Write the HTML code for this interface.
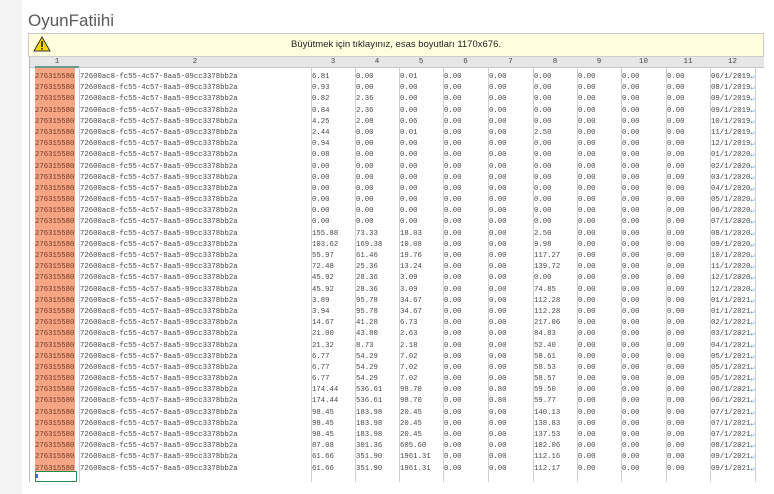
<!DOCTYPE html>
<html><head><meta charset="utf-8"><style>
*{margin:0;padding:0;box-sizing:border-box}
body{width:774px;height:494px;background:#fff;position:relative;overflow:hidden;font-family:"Liberation Sans",sans-serif}
.strip{position:absolute;left:0;top:0;width:22px;height:494px;background:#f4f4f4}
.bot{position:absolute;left:22px;top:482px;width:752px;height:12px;background:#fff}
h1{position:absolute;left:28px;top:11px;font-size:17px;font-weight:normal;color:#5a5a5a}
.note{position:absolute;left:28px;top:33px;width:736px;height:24px;background:#ffffe0;border:1px solid #ccc;font-size:9.5px;color:#222;text-align:center;line-height:22px}
.note svg{position:absolute;left:4px;top:2px}
.tbl{position:absolute;left:29px;top:57px;width:735px;height:425px;border-left:1px solid #bbb;background:#fff}
.hd{position:absolute;left:0;top:0;width:734px;height:11px;background:#e6e6e6;border-bottom:1px solid #c8c8c8}
.hd span{position:absolute;top:0;font:7.5px "Liberation Mono",monospace;color:#444;text-align:center;line-height:11px}
.vl{position:absolute;top:11px;width:1px;height:414px;background:#d0d0d0}
.sal{position:absolute;left:5px;top:11px;width:40px;height:403px;background:#f8a585}
.rows{position:absolute;left:0;top:15px;width:735px}
.r{height:11.2px;position:relative;font:7.3px "Liberation Mono",monospace;color:#474747;line-height:11px;white-space:nowrap}
.r span{position:absolute;top:0}
.r span:nth-child(1){left:5px;color:#6b3a22}
.r span:nth-child(2){left:50px}
.r span:nth-child(3){left:282px}
.r span:nth-child(4){left:326px}
.r span:nth-child(5){left:370px}
.r span:nth-child(6){left:414px}
.r span:nth-child(7){left:459px}
.r span:nth-child(8){left:504px}
.r span:nth-child(9){left:548px}
.r span:nth-child(10){left:592px}
.r span:nth-child(11){left:637px}
.r span:nth-child(12){left:681px}
.r span:nth-child(12)::after{content:"\21B5";color:#4a90e8;font-size:6px;vertical-align:top;font-family:"DejaVu Sans",sans-serif}
.sel{position:absolute;left:5px;top:414px;width:42px;height:11px;border:1px solid #2a8a4a}
.sel::before{content:"";position:absolute;left:0;top:2px;width:2px;height:4px;background:#3a6fd0}
</style></head><body>
<div class="strip"></div>
<h1>OyunFatiihi</h1>
<div class="note"><svg width="18" height="16" viewBox="0 0 18 16"><path d="M9 1 L17 15 L1 15 Z" fill="#ffd800" stroke="#333" stroke-width="1"/><rect x="8.2" y="5" width="1.6" height="6" fill="#222"/><rect x="8.2" y="12" width="1.6" height="1.6" fill="#222"/></svg>Büyütmek için tıklayınız, esas boyutları 1170x676.</div>
<div class="tbl">
<div class="hd">
<span style="left:5px;width:44px;border-bottom:2px solid #6a9a8a;height:11px">1</span>
<span style="left:49px;width:232px">2</span>
<span style="left:281px;width:44px">3</span>
<span style="left:325px;width:44px">4</span>
<span style="left:369px;width:44px">5</span>
<span style="left:413px;width:45px">6</span>
<span style="left:458px;width:45px">7</span>
<span style="left:503px;width:44px">8</span>
<span style="left:547px;width:44px">9</span>
<span style="left:591px;width:45px">10</span>
<span style="left:636px;width:44px">11</span>
<span style="left:680px;width:45px">12</span>
</div>
<div class="sal"></div>
<div class="vl" style="left:49px"></div><div class="vl" style="left:281px"></div><div class="vl" style="left:325px"></div><div class="vl" style="left:369px"></div><div class="vl" style="left:413px"></div><div class="vl" style="left:458px"></div><div class="vl" style="left:503px"></div><div class="vl" style="left:547px"></div><div class="vl" style="left:591px"></div><div class="vl" style="left:636px"></div><div class="vl" style="left:680px"></div><div class="vl" style="left:725px"></div>
<div class="rows">
<div class="r"><span>276315580</span><span>72600ac8-fc55-4c57-8aa5-09cc3378bb2a</span><span>6.81</span><span>0.00</span><span>0.01</span><span>0.00</span><span>0.00</span><span>0.00</span><span>0.00</span><span>0.00</span><span>0.00</span><span>06/1/2019</span></div>
<div class="r"><span>276315580</span><span>72600ac8-fc55-4c57-8aa5-09cc3378bb2a</span><span>0.93</span><span>0.00</span><span>0.00</span><span>0.00</span><span>0.00</span><span>0.00</span><span>0.00</span><span>0.00</span><span>0.00</span><span>08/1/2019</span></div>
<div class="r"><span>276315580</span><span>72600ac8-fc55-4c57-8aa5-09cc3378bb2a</span><span>0.82</span><span>2.36</span><span>0.00</span><span>0.00</span><span>0.00</span><span>0.00</span><span>0.00</span><span>0.00</span><span>0.00</span><span>09/1/2019</span></div>
<div class="r"><span>276315580</span><span>72600ac8-fc55-4c57-8aa5-09cc3378bb2a</span><span>0.84</span><span>2.36</span><span>0.00</span><span>0.00</span><span>0.00</span><span>0.00</span><span>0.00</span><span>0.00</span><span>0.00</span><span>09/1/2019</span></div>
<div class="r"><span>276315580</span><span>72600ac8-fc55-4c57-8aa5-09cc3378bb2a</span><span>4.25</span><span>2.08</span><span>0.06</span><span>0.00</span><span>0.00</span><span>0.00</span><span>0.00</span><span>0.00</span><span>0.00</span><span>10/1/2019</span></div>
<div class="r"><span>276315580</span><span>72600ac8-fc55-4c57-8aa5-09cc3378bb2a</span><span>2.44</span><span>0.00</span><span>0.01</span><span>0.00</span><span>0.00</span><span>2.50</span><span>0.00</span><span>0.00</span><span>0.00</span><span>11/1/2019</span></div>
<div class="r"><span>276315580</span><span>72600ac8-fc55-4c57-8aa5-09cc3378bb2a</span><span>0.94</span><span>0.00</span><span>0.00</span><span>0.00</span><span>0.00</span><span>0.00</span><span>0.00</span><span>0.00</span><span>0.00</span><span>12/1/2019</span></div>
<div class="r"><span>276315580</span><span>72600ac8-fc55-4c57-8aa5-09cc3378bb2a</span><span>0.08</span><span>0.00</span><span>0.00</span><span>0.00</span><span>0.00</span><span>0.00</span><span>0.00</span><span>0.00</span><span>0.00</span><span>01/1/2020</span></div>
<div class="r"><span>276315580</span><span>72600ac8-fc55-4c57-8aa5-09cc3378bb2a</span><span>0.00</span><span>0.00</span><span>0.00</span><span>0.00</span><span>0.00</span><span>0.00</span><span>0.00</span><span>0.00</span><span>0.00</span><span>02/1/2020</span></div>
<div class="r"><span>276315580</span><span>72600ac8-fc55-4c57-8aa5-09cc3378bb2a</span><span>0.00</span><span>0.00</span><span>0.00</span><span>0.00</span><span>0.00</span><span>0.00</span><span>0.00</span><span>0.00</span><span>0.00</span><span>03/1/2020</span></div>
<div class="r"><span>276315580</span><span>72600ac8-fc55-4c57-8aa5-09cc3378bb2a</span><span>0.00</span><span>0.00</span><span>0.00</span><span>0.00</span><span>0.00</span><span>0.00</span><span>0.00</span><span>0.00</span><span>0.00</span><span>04/1/2020</span></div>
<div class="r"><span>276315580</span><span>72600ac8-fc55-4c57-8aa5-09cc3378bb2a</span><span>0.00</span><span>0.00</span><span>0.00</span><span>0.00</span><span>0.00</span><span>0.00</span><span>0.00</span><span>0.00</span><span>0.00</span><span>05/1/2020</span></div>
<div class="r"><span>276315580</span><span>72600ac8-fc55-4c57-8aa5-09cc3378bb2a</span><span>0.00</span><span>0.00</span><span>0.00</span><span>0.00</span><span>0.00</span><span>0.00</span><span>0.00</span><span>0.00</span><span>0.00</span><span>06/1/2020</span></div>
<div class="r"><span>276315580</span><span>72600ac8-fc55-4c57-8aa5-09cc3378bb2a</span><span>0.00</span><span>0.00</span><span>0.00</span><span>0.00</span><span>0.00</span><span>0.00</span><span>0.00</span><span>0.00</span><span>0.00</span><span>07/1/2020</span></div>
<div class="r"><span>276315580</span><span>72600ac8-fc55-4c57-8aa5-09cc3378bb2a</span><span>155.88</span><span>73.33</span><span>18.03</span><span>0.00</span><span>0.00</span><span>2.50</span><span>0.00</span><span>0.00</span><span>0.00</span><span>08/1/2020</span></div>
<div class="r"><span>276315580</span><span>72600ac8-fc55-4c57-8aa5-09cc3378bb2a</span><span>103.62</span><span>169.38</span><span>10.08</span><span>0.00</span><span>0.00</span><span>9.98</span><span>0.00</span><span>0.00</span><span>0.00</span><span>09/1/2020</span></div>
<div class="r"><span>276315580</span><span>72600ac8-fc55-4c57-8aa5-09cc3378bb2a</span><span>55.97</span><span>61.46</span><span>19.76</span><span>0.00</span><span>0.00</span><span>117.27</span><span>0.00</span><span>0.00</span><span>0.00</span><span>10/1/2020</span></div>
<div class="r"><span>276315580</span><span>72600ac8-fc55-4c57-8aa5-09cc3378bb2a</span><span>72.48</span><span>25.36</span><span>13.24</span><span>0.00</span><span>0.00</span><span>139.72</span><span>0.00</span><span>0.00</span><span>0.00</span><span>11/1/2020</span></div>
<div class="r"><span>276315580</span><span>72600ac8-fc55-4c57-8aa5-09cc3378bb2a</span><span>45.92</span><span>28.36</span><span>3.09</span><span>0.00</span><span>0.00</span><span>0.00</span><span>0.00</span><span>0.00</span><span>0.00</span><span>12/1/2020</span></div>
<div class="r"><span>276315580</span><span>72600ac8-fc55-4c57-8aa5-09cc3378bb2a</span><span>45.92</span><span>28.36</span><span>3.09</span><span>0.00</span><span>0.00</span><span>74.85</span><span>0.00</span><span>0.00</span><span>0.00</span><span>12/1/2020</span></div>
<div class="r"><span>276315580</span><span>72600ac8-fc55-4c57-8aa5-09cc3378bb2a</span><span>3.89</span><span>95.78</span><span>34.67</span><span>0.00</span><span>0.00</span><span>112.28</span><span>0.00</span><span>0.00</span><span>0.00</span><span>01/1/2021</span></div>
<div class="r"><span>276315580</span><span>72600ac8-fc55-4c57-8aa5-09cc3378bb2a</span><span>3.94</span><span>95.78</span><span>34.67</span><span>0.00</span><span>0.00</span><span>112.28</span><span>0.00</span><span>0.00</span><span>0.00</span><span>01/1/2021</span></div>
<div class="r"><span>276315580</span><span>72600ac8-fc55-4c57-8aa5-09cc3378bb2a</span><span>14.67</span><span>41.28</span><span>6.73</span><span>0.00</span><span>0.00</span><span>217.06</span><span>0.00</span><span>0.00</span><span>0.00</span><span>02/1/2021</span></div>
<div class="r"><span>276315580</span><span>72600ac8-fc55-4c57-8aa5-09cc3378bb2a</span><span>21.00</span><span>43.80</span><span>2.63</span><span>0.00</span><span>0.00</span><span>84.83</span><span>0.00</span><span>0.00</span><span>0.00</span><span>03/1/2021</span></div>
<div class="r"><span>276315580</span><span>72600ac8-fc55-4c57-8aa5-09cc3378bb2a</span><span>21.32</span><span>8.73</span><span>2.18</span><span>0.00</span><span>0.00</span><span>52.40</span><span>0.00</span><span>0.00</span><span>0.00</span><span>04/1/2021</span></div>
<div class="r"><span>276315580</span><span>72600ac8-fc55-4c57-8aa5-09cc3378bb2a</span><span>6.77</span><span>54.29</span><span>7.02</span><span>0.00</span><span>0.00</span><span>58.61</span><span>0.00</span><span>0.00</span><span>0.00</span><span>05/1/2021</span></div>
<div class="r"><span>276315580</span><span>72600ac8-fc55-4c57-8aa5-09cc3378bb2a</span><span>6.77</span><span>54.29</span><span>7.02</span><span>0.00</span><span>0.00</span><span>58.53</span><span>0.00</span><span>0.00</span><span>0.00</span><span>05/1/2021</span></div>
<div class="r"><span>276315580</span><span>72600ac8-fc55-4c57-8aa5-09cc3378bb2a</span><span>6.77</span><span>54.29</span><span>7.02</span><span>0.00</span><span>0.00</span><span>58.57</span><span>0.00</span><span>0.00</span><span>0.00</span><span>05/1/2021</span></div>
<div class="r"><span>276315580</span><span>72600ac8-fc55-4c57-8aa5-09cc3378bb2a</span><span>174.44</span><span>536.61</span><span>98.70</span><span>0.00</span><span>0.80</span><span>59.50</span><span>0.00</span><span>0.00</span><span>0.00</span><span>06/1/2021</span></div>
<div class="r"><span>276315580</span><span>72600ac8-fc55-4c57-8aa5-09cc3378bb2a</span><span>174.44</span><span>536.61</span><span>98.70</span><span>0.00</span><span>0.80</span><span>59.77</span><span>0.00</span><span>0.00</span><span>0.00</span><span>06/1/2021</span></div>
<div class="r"><span>276315580</span><span>72600ac8-fc55-4c57-8aa5-09cc3378bb2a</span><span>98.45</span><span>183.98</span><span>20.45</span><span>0.00</span><span>0.00</span><span>140.13</span><span>0.00</span><span>0.00</span><span>0.00</span><span>07/1/2021</span></div>
<div class="r"><span>276315580</span><span>72600ac8-fc55-4c57-8aa5-09cc3378bb2a</span><span>98.45</span><span>183.98</span><span>20.45</span><span>0.00</span><span>0.00</span><span>138.83</span><span>0.00</span><span>0.00</span><span>0.00</span><span>07/1/2021</span></div>
<div class="r"><span>276315580</span><span>72600ac8-fc55-4c57-8aa5-09cc3378bb2a</span><span>98.45</span><span>183.98</span><span>20.45</span><span>0.00</span><span>0.00</span><span>137.53</span><span>0.00</span><span>0.00</span><span>0.00</span><span>07/1/2021</span></div>
<div class="r"><span>276315580</span><span>72600ac8-fc55-4c57-8aa5-09cc3378bb2a</span><span>87.08</span><span>301.36</span><span>605.60</span><span>0.00</span><span>0.00</span><span>102.06</span><span>0.00</span><span>0.00</span><span>0.00</span><span>08/1/2021</span></div>
<div class="r"><span>276315580</span><span>72600ac8-fc55-4c57-8aa5-09cc3378bb2a</span><span>61.66</span><span>351.90</span><span>1961.31</span><span>0.00</span><span>0.00</span><span>112.16</span><span>0.00</span><span>0.00</span><span>0.00</span><span>09/1/2021</span></div>
<div class="r"><span>276315580</span><span>72600ac8-fc55-4c57-8aa5-09cc3378bb2a</span><span>61.66</span><span>351.90</span><span>1961.31</span><span>0.00</span><span>0.00</span><span>112.17</span><span>0.00</span><span>0.00</span><span>0.00</span><span>09/1/2021</span></div>
</div>
<div class="sel"></div>
</div>
<div class="bot"></div>
</body></html>
